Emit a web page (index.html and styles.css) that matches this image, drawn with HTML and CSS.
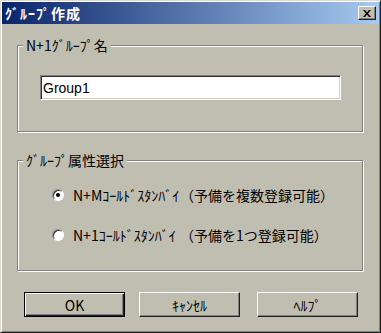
FILE: index.html
```html
<!DOCTYPE html>
<html lang="ja">
<head>
    <meta charset="UTF-8">
    <meta name="viewport" content="width=device-width, initial-scale=1.0">
    <title>ｸﾞﾙｰﾌﾟ作成</title>
    <link rel="stylesheet" href="styles.css">
</head>
<body>
    <div class="dialog">
        <div class="titlebar">
            <span class="title">ｸﾞﾙｰﾌﾟ作成</span>
            <button class="close-btn" aria-label="close">
                <svg width="8" height="7" viewBox="0 0 8 7">
                    <path d="M0 0h2l2 2.5L6 0h2L5 3.5 8 7H6L4 4.5 2 7H0l3-3.5z" fill="#000"/>
                </svg>
            </button>
        </div>

        <div class="content">
            <div class="group group-name">
                <div class="group-label">N+1ｸﾞﾙｰﾌﾟ名</div>
                <input type="text" class="text-input" value="Group1">
            </div>

            <div class="group group-type">
                <div class="group-label">ｸﾞﾙｰﾌﾟ属性選択</div>
                <label class="radio-row first">
                    <input type="radio" name="type" class="radio" checked>
                    <span class="radio-name">N+Mｺｰﾙﾄﾞｽﾀﾝﾊﾞｲ</span>
                    <span>（予備を複数登録可能）</span>
                </label>
                <label class="radio-row">
                    <input type="radio" name="type" class="radio">
                    <span class="radio-name">N+1ｺｰﾙﾄﾞｽﾀﾝﾊﾞｲ</span>
                    <span>（予備を1つ登録可能）</span>
                </label>
            </div>

            <div class="buttons">
                <button class="btn default">OK</button>
                <button class="btn cancel">ｷｬﾝｾﾙ</button>
                <button class="btn help">ﾍﾙﾌﾟ</button>
            </div>
        </div>
    </div>
</body>
</html>
```

FILE: styles.css
```css
body {
    margin: 0;
    background-color: #c0bdb1;
    font-family: "Noto Sans CJK JP", "Liberation Sans", sans-serif;
    font-size: 14px;
    color: #000;
}
.dialog {
    width: 381px;
    height: 333px;
    box-sizing: border-box;
    padding: 1px;
    background-color: #c0bdb1;
    border: 1px solid;
    border-color: #dcd9d0 #202020 #202020 #dcd9d0;
    box-shadow: inset 1px 1px 0 #fff, inset -1px -1px 0 #808080;
}
.titlebar {
    height: 22px;
    display: flex;
    align-items: center;
    justify-content: space-between;
    background: linear-gradient(to right, #0a246a, #a6caf0);
}
.title {
    color: #fff;
    font-weight: bold;
    font-size: 14px;
    letter-spacing: 1px;
    margin-left: 3px;
    line-height: 22px;
}
.close-btn {
    width: 18px;
    height: 14px;
    margin-right: 3px;
    padding: 0;
    display: flex;
    align-items: center;
    justify-content: center;
    background-color: #c0bdb1;
    border: 1px solid;
    border-color: #fff #202020 #202020 #fff;
    box-shadow: inset -1px -1px 0 #808080;
}
.content {
    padding: 21px 0 0 15px;
}
.group {
    width: 346px;
    box-sizing: border-box;
    border: 1px solid #808080;
    box-shadow: inset 1px 1px 0 #fff, 1px 1px 0 #fff;
}
.group-name {
    height: 87px;
}
.group-type {
    height: 111px;
    margin-top: 28px;
}
.group-label {
    width: fit-content;
    margin: -9px 0 0 5px;
    padding: 0 3px;
    line-height: 16px;
    background-color: #c0bdb1;
}
.text-input {
    display: block;
    width: 301px;
    height: 25px;
    box-sizing: border-box;
    margin: 22px 0 0 22px;
    padding: 0 2px;
    font-family: "Liberation Sans", sans-serif;
    font-size: 14px;
    background-color: #fff;
    border: 1px solid;
    border-color: #808080 #fff #fff #808080;
    box-shadow: inset 1px 1px 0 #303030, inset -1px -1px 0 #d4d0c8;
    outline: none;
}
.radio-row {
    display: flex;
    align-items: center;
    height: 16px;
    margin: 24px 0 0 34px;
}
.radio-row.first {
    margin-top: 19px;
}
.radio {
    appearance: none;
    width: 12px;
    height: 12px;
    margin: 0 9px 0 0;
    box-sizing: border-box;
    border-radius: 50%;
    border: 1px solid;
    border-color: #808080 #fff #fff #808080;
    box-shadow: inset 1px 1px 0 #303030;
    background-color: #fff;
    display: flex;
    align-items: center;
    justify-content: center;
}
.radio:checked::after {
    content: "";
    width: 4px;
    height: 4px;
    border-radius: 50%;
    background-color: #000;
}
.radio-name {
    width: 107px;
}
.buttons {
    display: flex;
    margin: 21px 0 0 7px;
}
.btn {
    width: 101px;
    height: 25px;
    padding: 0;
    font-family: "Noto Sans CJK JP", "Liberation Sans", sans-serif;
    font-size: 14px;
    color: #000;
    background-color: #c0bdb1;
    border: 1px solid;
    border-color: #fff #202020 #202020 #fff;
    box-shadow: inset -1px -1px 0 #808080;
}
.btn.default {
    border-color: #000;
    box-shadow: inset 1px 1px 0 #fff, inset -1px -1px 0 #202020, inset -2px -2px 0 #808080;
}
.btn.cancel {
    margin-left: 14px;
}
.btn.help {
    margin-left: 17px;
}
```
